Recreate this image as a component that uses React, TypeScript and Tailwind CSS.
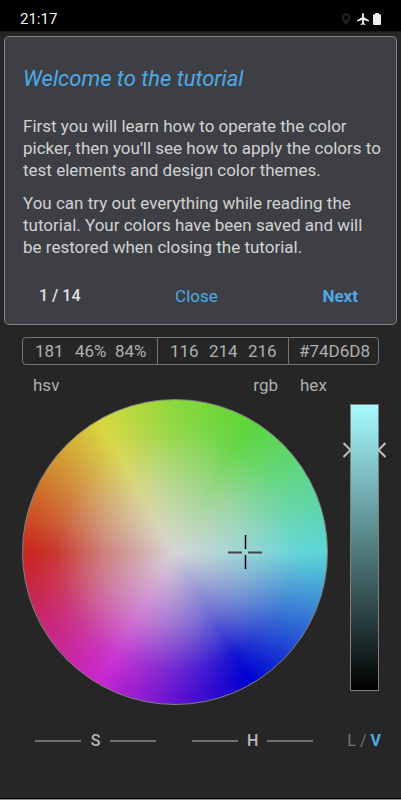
import { useState } from 'react'

const HSV = [
  { id: 'hue', label: 'Hue', value: '181' },
  { id: 'saturation', label: 'Saturation', value: '46%' },
  { id: 'value', label: 'Value', value: '84%' },
]

const RGB = [
  { id: 'red', label: 'Red', value: '116' },
  { id: 'green', label: 'Green', value: '214' },
  { id: 'blue', label: 'Blue', value: '216' },
]

function StatusBar() {
  return (
    <header className="flex h-8 items-center justify-between border-b border-[#1a1a1a] bg-black px-5 pt-1.5">
      <span className="text-[15px] leading-4 text-[#f0f0f0]">21:17</span>
      <div className="flex items-center gap-1 text-[#f0f0f0]">
        <svg className="mr-0.5 h-3 w-2.5 text-[#1d1d1d]" viewBox="0 0 10 12" fill="currentColor">
          <path fillRule="evenodd" d="M5 0a4.4 4.4 0 0 0-4.4 4.4C.6 7.700 5 12 5 12s4.400-4.300 4.400-7.600A4.400 4.400 0 0 0 5 0Zm0 2.400a2 2 0 1 1 0 4 2 2 0 0 1 0-4Z" />
        </svg>
        <svg className="h-3 w-3" viewBox="2 2 20 20" fill="currentColor">
          <path d="M22 16v-2l-8.500-5V3.500a1.500 1.500 0 0 0-3 0V9L2 14v2l8.500-2.500V19L8 20.500V22l4-1 4 1v-1.500L13.500 19v-5.500L22 16Z" />
        </svg>
        <svg className="h-3 w-2" viewBox="0 0 8 12" fill="currentColor">
          <path d="M2.200 0h3.600v1.200H7a1 1 0 0 1 1 1V11a1 1 0 0 1-1 1H1a1 1 0 0 1-1-1V2.200a1 1 0 0 1 1-1h1.200Z" />
        </svg>
      </div>
    </header>
  )
}

function TutorialPanel() {
  return (
    <section className="mx-1 mt-1 rounded-[5px] border border-[#858585] bg-[#3d3f44] pt-7 pr-3 pb-4 pl-[18px]">
      <h1 className="text-[22px] leading-7 italic text-[#4fa9e6]">Welcome to the tutorial</h1>
      <div className="mt-[22px] flex flex-col gap-[11px] text-[17px] leading-[22px] text-[#d2d2d2]">
        <p>
          First you will learn how to operate the color picker, then you'll see how to apply the
          colors to test elements and design color themes.
        </p>
        <p>
          You can try out everything while reading the tutorial. Your colors have been saved and
          will be restored when closing the tutorial.
        </p>
      </div>
      <div className="mt-[26px] flex items-center justify-between pr-[26px] pl-4 text-[17px] leading-6">
        <span className="text-base leading-6 font-medium text-[#e0e0e0]">1 / 14</span>
        <button type="button" className="text-[#4fa9e6]">Close</button>
        <button type="button" className="pl-2.5 font-bold text-[#4fa9e6]">Next</button>
      </div>
    </section>
  )
}

function ColorValues() {
  return (
    <div className="text-[17px] text-[#b0b0b0]">
      <div className="flex h-7 rounded-[4px] border border-[#757575]">
        <div className="flex flex-1 items-center gap-2 pt-0.5 pl-3">
          {HSV.map((f) => (
            <input key={f.id} id={f.id} aria-label={f.label} defaultValue={f.value} className="w-8 bg-transparent outline-none" />
          ))}
        </div>
        <div className="flex w-[132px] items-center justify-between border-x border-[#757575] px-3 pt-0.5">
          {RGB.map((f) => (
            <input key={f.id} id={f.id} aria-label={f.label} defaultValue={f.value} className="w-7 bg-transparent outline-none" />
          ))}
        </div>
        <div className="flex w-[89px] items-center pt-0.5 pl-2.5">
          <input id="hex" defaultValue="#74D6D8" className="w-full bg-transparent outline-none" />
        </div>
      </div>
      <div className="mt-2 flex leading-6">
        <label htmlFor="hue" className="flex-1 pl-[11px]">hsv</label>
        <label htmlFor="red" className="pr-[22px]">rgb</label>
        <label htmlFor="hex" className="w-[79px]">hex</label>
      </div>
    </div>
  )
}

function ColorWheel() {
  return (
    <div className="relative aspect-square flex-1 rounded-full border border-[#808080] bg-[radial-gradient(closest-side,#d6d6d6,#d6d6d680_47%,#d6d6d618_78%,#d6d6d600_94%),conic-gradient(from_270deg,#c8281e,#d8d840_60deg,#8cd83c_90deg,#5cd63a_120deg,#60d68c_150deg,#5cd6d8_180deg,#0000d0_240deg,#c828d0_300deg,#c8281e)]">
      {/* crosshair sits at hue 181, saturation 46% */}
      <svg className="absolute top-1/2 left-[73%] h-[34px] w-[34px] -translate-x-1/2 -translate-y-1/2" viewBox="0 0 34 34" stroke="#000">
        <path d="M17.500 0v14M17.500 20v14" strokeWidth="1.500" />
        <path d="M0 17.500h14M20 17.500h14" stroke="#444" strokeWidth="2" />
      </svg>
    </div>
  )
}

function BrightnessBar() {
  const [value, setValue] = useState(84)

  return (
    <div className="relative mt-[5px] mb-3.5 w-[29px]">
      <input
        type="range"
        aria-label="Brightness"
        min={0}
        max={100}
        value={value}
        onChange={(e) => setValue(Number(e.target.value))}
        className="absolute inset-0 m-0 h-full w-full appearance-none border border-[#808080] bg-[linear-gradient(#a6fbff,#000)] [direction:rtl] [writing-mode:vertical-lr] [&::-webkit-slider-thumb]:appearance-none"
      />
      <svg
        className="pointer-events-none absolute -left-[7px] h-4 w-[43px] -translate-y-1/2"
        style={{ top: `${100 - value}%` }}
        viewBox="0 0 43 16"
        fill="none"
        stroke="#c0c0c0"
        strokeWidth="2"
      >
        <path d="M.5 1 7.500 8 .5 15M42.500 1l-7 7 7 7" />
      </svg>
    </div>
  )
}

function DragControl({ label }: { label: string }) {
  return (
    <button type="button" className="flex flex-1 items-center">
      <span className="h-0.5 flex-1 bg-[#707070]" />
      <span className="w-[29px] text-center">{label}</span>
      <span className="h-0.5 flex-1 bg-[#707070]" />
    </button>
  )
}

export default function App() {
  return (
    <div className="flex min-h-screen flex-col border-b border-[#909090] bg-[#262626] font-['Roboto',sans-serif]">
      <StatusBar />
      <TutorialPanel />
      <main className="flex flex-1 flex-col border-b border-black px-5 pt-3">
        <div className="px-0.5">
          <ColorValues />
          <div className="mt-0.5 flex gap-[22px]">
            <ColorWheel />
            <BrightnessBar />
          </div>
        </div>
        <div className="mt-6 flex items-center pl-[15px] text-base leading-6 text-[#b8b8b8]">
          <div className="flex flex-1 gap-9 font-medium">
            <DragControl label="S" />
            <DragControl label="H" />
          </div>
          <div className="ml-[34px] flex gap-1 text-[#757575]">
            <button type="button">L</button>
            <span>/</span>
            <button type="button" className="font-bold text-[#4fa9e6]">V</button>
          </div>
        </div>
      </main>
    </div>
  )
}
